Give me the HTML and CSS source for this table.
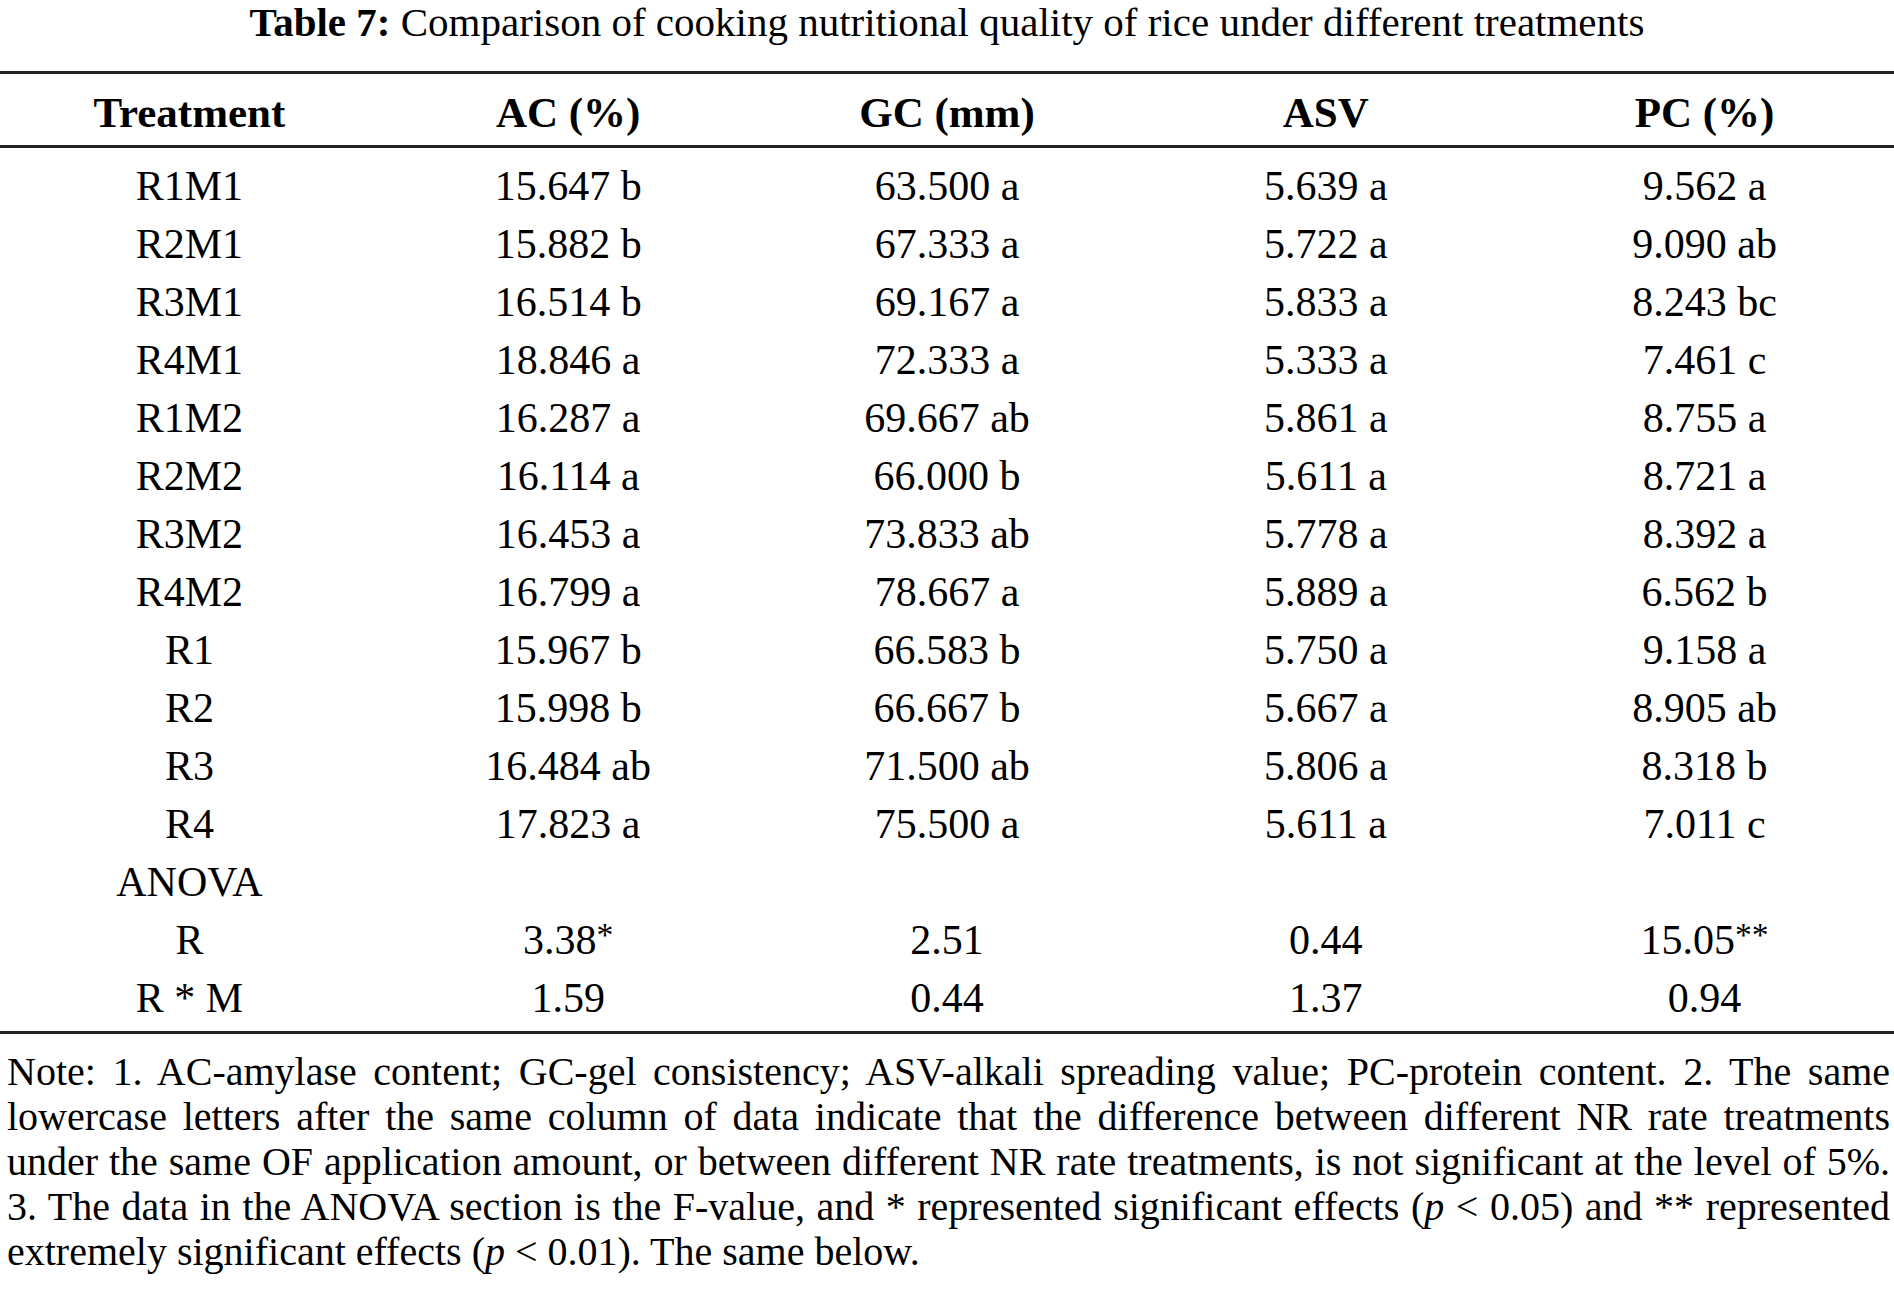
FILE: index.html
```html
<!DOCTYPE html>
<html lang="en">
<head>
<meta charset="utf-8">
<title>Table 7</title>
<link rel="stylesheet" href="styles.css">
</head>
<body>
<div class="page">
  <h1 class="caption"><b>Table 7:</b> Comparison of cooking nutritional quality of rice under different treatments</h1>
  <table class="data">
    <thead>
      <tr><th>Treatment</th><th>AC (%)</th><th>GC (mm)</th><th>ASV</th><th>PC (%)</th></tr>
    </thead>
    <tbody>
      <tr><td>R1M1</td><td>15.647 b</td><td>63.500 a</td><td>5.639 a</td><td>9.562 a</td></tr>
      <tr><td>R2M1</td><td>15.882 b</td><td>67.333 a</td><td>5.722 a</td><td>9.090 ab</td></tr>
      <tr><td>R3M1</td><td>16.514 b</td><td>69.167 a</td><td>5.833 a</td><td>8.243 bc</td></tr>
      <tr><td>R4M1</td><td>18.846 a</td><td>72.333 a</td><td>5.333 a</td><td>7.461 c</td></tr>
      <tr><td>R1M2</td><td>16.287 a</td><td>69.667 ab</td><td>5.861 a</td><td>8.755 a</td></tr>
      <tr><td>R2M2</td><td>16.114 a</td><td>66.000 b</td><td>5.611 a</td><td>8.721 a</td></tr>
      <tr><td>R3M2</td><td>16.453 a</td><td>73.833 ab</td><td>5.778 a</td><td>8.392 a</td></tr>
      <tr><td>R4M2</td><td>16.799 a</td><td>78.667 a</td><td>5.889 a</td><td>6.562 b</td></tr>
      <tr><td>R1</td><td>15.967 b</td><td>66.583 b</td><td>5.750 a</td><td>9.158 a</td></tr>
      <tr><td>R2</td><td>15.998 b</td><td>66.667 b</td><td>5.667 a</td><td>8.905 ab</td></tr>
      <tr><td>R3</td><td>16.484 ab</td><td>71.500 ab</td><td>5.806 a</td><td>8.318 b</td></tr>
      <tr><td>R4</td><td>17.823 a</td><td>75.500 a</td><td>5.611 a</td><td>7.011 c</td></tr>
      <tr><td>ANOVA</td><td></td><td></td><td></td><td></td></tr>
      <tr><td>R</td><td>3.38<span class="sig">*</span></td><td>2.51</td><td>0.44</td><td>15.05<span class="sig">**</span></td></tr>
      <tr><td>R * M</td><td>1.59</td><td>0.44</td><td>1.37</td><td>0.94</td></tr>
    </tbody>
  </table>
  <div class="note">
    <div class="line">Note: 1. AC-amylase content; GC-gel consistency; ASV-alkali spreading value; PC-protein content. 2. The same</div>
    <div class="line">lowercase letters after the same column of data indicate that the difference between different NR rate treatments</div>
    <div class="line">under the same OF application amount, or between different NR rate treatments, is not significant at the level of 5%.</div>
    <div class="line">3. The data in the ANOVA section is the F-value, and * represented significant effects (<i>p</i> &lt; 0.05) and ** represented</div>
    <div class="line last">extremely significant effects (<i>p</i> &lt; 0.01). The same below.</div>
  </div>
</div>
</body>
</html>
```

FILE: styles.css
```css
html, body {
  margin: 0;
  padding: 0;
  background: #ffffff;
}

body {
  font-family: "Liberation Serif", "Times New Roman", serif;
  color: #000000;
}

.page {
  width: 1894px;
}

.caption {
  margin: 0 0 26px;
  font-size: 41px;
  font-weight: normal;
  line-height: 45px;
  text-align: center;
}

.caption b {
  font-weight: bold;
}

.data {
  width: 100%;
  border-collapse: separate;
  border-spacing: 0;
  table-layout: fixed;
}

.data th {
  font-size: 43px;
  font-weight: bold;
  line-height: 65px;
  padding: 6px 0 0;
  text-align: center;
  border-top: 3px solid #222222;
  border-bottom: 3px solid #222222;
}

.data td {
  font-size: 42px;
  line-height: 58px;
  padding: 0;
  text-align: center;
  white-space: nowrap;
}

.data tbody tr:first-child td {
  padding-top: 9px;
}

.data tbody tr:last-child td {
  padding-bottom: 4px;
  border-bottom: 3px solid #222222;
}

.sig {
  font-size: 0.8em;
  vertical-align: 0.25em;
  line-height: 0;
}

.note {
  margin-top: 15px;
  padding: 0 4px 0 7px;
  font-size: 40px;
  line-height: 45px;
}

.note .line {
  text-align: justify;
  text-align-last: justify;
}

.note .line.last {
  text-align-last: left;
}
```
